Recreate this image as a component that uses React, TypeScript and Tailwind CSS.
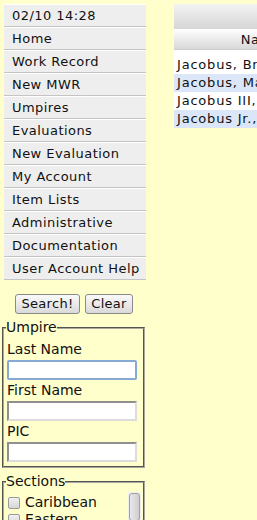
import React from "react";

const menuItems = [
  "02/10 14:28",
  "Home",
  "Work Record",
  "New MWR",
  "Umpires",
  "Evaluations",
  "New Evaluation",
  "My Account",
  "Item Lists",
  "Administrative",
  "Documentation",
  "User Account Help",
];

const results = [
  "Jacobus, Brett",
  "Jacobus, Mark",
  "Jacobus III, John",
  "Jacobus Jr., Robert",
];

const sections = ["Caribbean", "Eastern", "Western"];

function TextField({ label, focused }: { label: string; focused?: boolean }) {
  return (
    <div className="flex flex-col">
      <div className="h-[21px] leading-[21px] text-[14px]">{label}</div>
      <input
        className={
          focused
            ? "h-[20px] w-[130px] rounded-[2px] border-2 border-[#86a9d6] bg-white outline-none"
            : "h-[20px] w-[130px] border-2 border-t-[#8f8f8f] border-l-[#8f8f8f] border-r-[#dcdcdc] border-b-[#dcdcdc] bg-white outline-none"
        }
      />
    </div>
  );
}

export default function App() {
  return (
    <div className="flex h-[520px] w-[257px] overflow-hidden bg-[#ffffcc] font-['DejaVu_Sans',sans-serif] text-[#111]">
      <div className="flex w-[148px] shrink-0 flex-col">
        <div className="ml-[4px] mt-[4px] flex w-[142px] flex-col">
          {menuItems.map((item) => (
            <div
              key={item}
              className="h-[23px] border-t border-b border-t-white border-b-[#c4c4c4] bg-[#eeeeee] pl-[8px] text-[13px] leading-[21px] tracking-[0.45px]"
            >
              {item}
            </div>
          ))}
        </div>

        <div className="mt-[14px] flex justify-center gap-[5px]">
          <button className="h-[20px] w-[65px] rounded-[3px] border border-[#8a8a8a] bg-gradient-to-b from-[#fafafa] to-[#dadada] text-[13px] leading-[18px] tracking-[0.3px]">
            Search!
          </button>
          <button className="h-[20px] w-[48px] rounded-[3px] border border-[#8a8a8a] bg-gradient-to-b from-[#fafafa] to-[#dadada] text-[13px] leading-[18px] tracking-[0.3px]">
            Clear
          </button>
        </div>

        <fieldset className="ml-[2px] mt-[5px] w-[143px] border-2 border-[#a8a8a0] pl-[3px] pr-0 pb-[4px] pt-[3px] [border-style:groove]">
          <legend className="ml-[-1px] px-0 text-[14px] leading-[17px]">Umpire</legend>
          <TextField label="Last Name" focused />
          <TextField label="First Name" />
          <TextField label="PIC" />
        </fieldset>

        <fieldset className="ml-[2px] mt-[5px] w-[143px] border-2 border-[#a8a8a0] px-0 pt-[2px] [border-style:groove]">
          <legend className="ml-[2px] px-0 text-[14px] leading-[17px]">Sections</legend>
          <div className="flex h-[60px]">
            <div className="flex flex-1 flex-col pl-[4px] pt-[2px]">
              {sections.map((s) => (
                <label key={s} className="flex h-[17px] items-center gap-[5px] text-[14px]">
                  <span className="h-[12px] w-[12px] rounded-[2px] border border-[#9a9a9a] bg-gradient-to-b from-[#f0f0f0] to-[#d6d6d6]" />
                  {s}
                </label>
              ))}
            </div>
            <div className="mr-[2px] w-[13px] bg-[#f0f0f0] p-[1px]">
              <div className="h-[28px] rounded-[3px] border border-[#a0a0a0] bg-gradient-to-r from-[#e8e8e8] to-[#cfcfcf]" />
            </div>
          </div>
        </fieldset>
      </div>

      <div className="ml-[26px] mt-[4px] w-[174px] shrink-0 self-start bg-white">
        <div className="h-[25px] bg-gradient-to-b from-[#f3f3f3] to-[#d6d6d6]" />
        <div className="h-[21px] border-b border-[#cccccc] bg-gradient-to-b from-[#ffffff] to-[#d8d8d8] text-center text-[13px] leading-[21px] tracking-[0.5px]">
          Name
        </div>
        <div className="h-[6px]" />
        {results.map((r, i) => (
          <div
            key={r}
            className={`h-[18px] whitespace-nowrap pl-[3px] text-[13px] leading-[18px] tracking-[0.8px] ${i % 2 === 1 ? "bg-[#dbe7f8]" : "bg-white"}`}
          >
            {r}
          </div>
        ))}
      </div>
    </div>
  );
}
